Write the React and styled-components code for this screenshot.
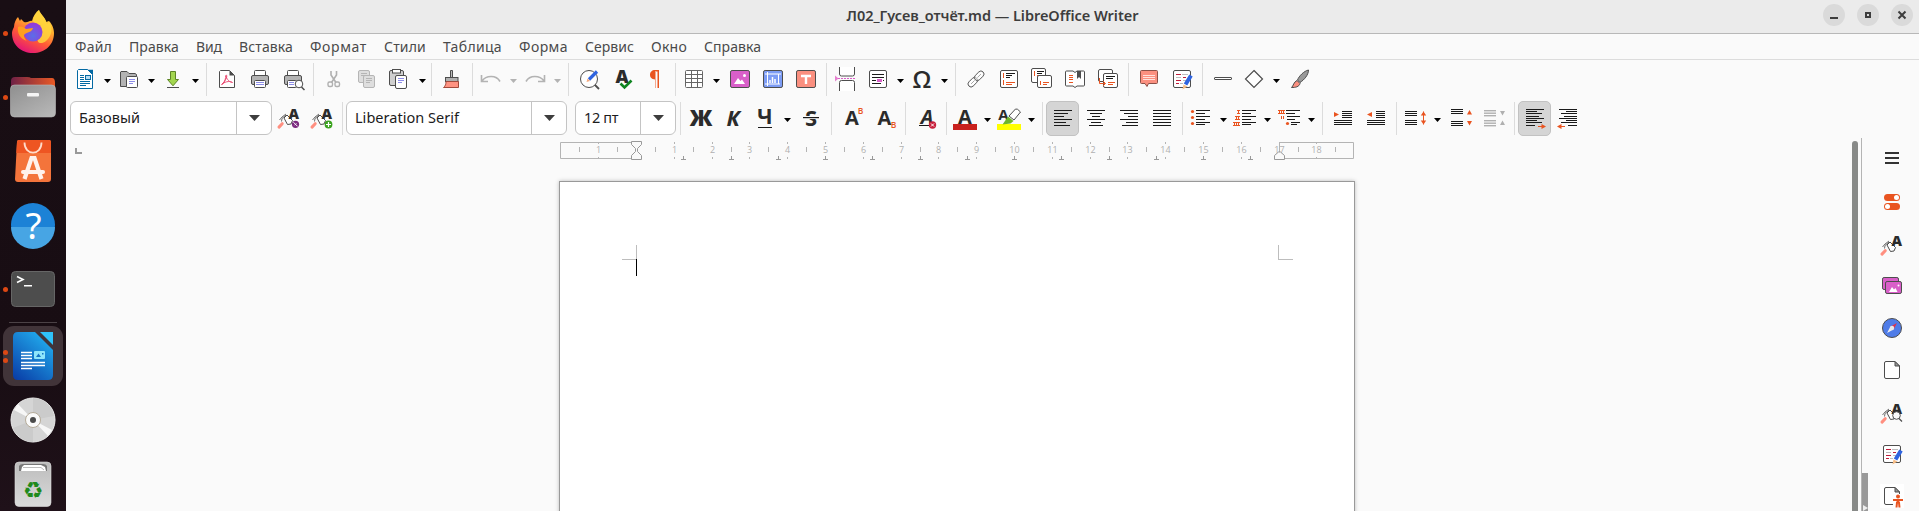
import React, { useLayoutEffect, useRef, useState } from 'react';
import styled, { createGlobalStyle, css } from 'styled-components';

const Global = createGlobalStyle`
  * { box-sizing: border-box; }
  html, body { margin: 0; padding: 0; overflow: hidden; }
  body { font-family: "Noto Sans", "Open Sans", sans-serif; background: #fafafa; }
  svg { display: block; overflow: visible; }
`;

const Desktop = styled.div`
  display: flex;
  width: 1919px;
  height: 511px;
  overflow: hidden;
`;

/* ---------- dock ---------- */
const Dock = styled.nav`
  flex: 0 0 66px;
  height: 511px;
  padding-top: 1px;
  background: linear-gradient(#190e14 0%, #180d13 70%, #1f1119 100%);
  overflow: hidden;
`;
const DockSlot = styled.div`
  position: relative;
  height: 64px;
  padding: 2px 3px;
`;
const DockTile = styled.div`
  width: 60px;
  height: 60px;
  border-radius: 11px;
  background: ${(p) => (p.$active ? '#413439' : 'transparent')};
`;
const DockDots = styled.div`
  position: absolute;
  left: 3px;
  top: 0;
  height: 64px;
  display: flex;
  flex-direction: column;
  justify-content: center;
  gap: 3px;
`;
const Dot = styled.i`
  width: 5px;
  height: 5px;
  border-radius: 50%;
  background: #dd4814;
`;
const DockRule = styled.div`
  height: 1px;
  margin: 1px 9px;
  background: #4b4246;
`;

/* ---------- window ---------- */
const Window = styled.main`
  flex: 1;
  min-width: 0;
  height: 511px;
  display: flex;
  flex-direction: column;
  background: #fafafa;
`;
const TitleBar = styled.header`
  position: relative;
  flex: 0 0 34px;
  display: flex;
  justify-content: center;
  background: #ebebeb;
  border-bottom: 1px solid #b8b8b8;
  color: #3d3d3d;
  font-size: 14.5px;
  font-weight: 600;
  line-height: 30px;
`;
const WindowButtons = styled.div`
  position: absolute;
  right: 6px;
  top: 4px;
  display: flex;
  gap: 12px;
`;
const WindowButton = styled.div`
  width: 22px;
  height: 22px;
  border-radius: 50%;
  background: #dadada;
`;
const MenuBar = styled.nav`
  flex: 0 0 26px;
  display: flex;
  gap: 17px;
  padding-left: 9px;
  border-bottom: 1px solid #dcdcdc;
  color: #4a4a4a;
  font-size: 14px;
  line-height: 25px;
`;
const Toolbar = styled.div`
  flex: 0 0 ${(p) => p.$height}px;
  display: flex;
  align-items: flex-start;
  padding: ${(p) => p.$top}px 0 0 ${(p) => p.$left}px;
`;
const ToolButton = styled.div`
  flex: none;
  width: 33px;
  height: 35px;
  padding: ${(p) => (p.$active ? '4px 3px' : '5px 4px')};
  margin-left: ${(p) => p.$pre || 0}px;
  ${(p) =>
    p.$active &&
    css`
      background: #d5d5d5;
      border: 1px solid #c2c2c2;
      border-radius: 5px;
    `}
`;
const Caret = styled.div`
  flex: none;
  width: 11px;
  height: 35px;
  padding: 17px 0 0 2px;
`;
const Divider = styled.div`
  flex: none;
  width: 1px;
  height: 33px;
  margin: 1px ${(p) => p.$r}px 0 ${(p) => p.$l}px;
  background: #dcdcdc;
`;
const Combo = styled.div`
  flex: none;
  display: flex;
  width: ${(p) => p.$width}px;
  height: 34px;
  margin-right: ${(p) => p.$after}px;
  border: 1px solid #c4c4c4;
  border-radius: 6px;
  background: #fff;
  color: #1c1c1c;
  font-size: 14.5px;
  line-height: 31px;
`;
const ComboText = styled.div`
  flex: 1;
  padding-left: 8px;
`;
const ComboArrow = styled.div`
  width: 35px;
  border-left: 1px solid #c4c4c4;
  padding: 13px 0 0 12px;
`;

const Work = styled.div`
  flex: 1;
  display: flex;
  min-height: 0;
`;
const DocumentArea = styled.section`
  flex: 0 0 1786px;
  display: flex;
  flex-direction: column;
  align-items: flex-start;
`;
const RulerRow = styled.div`
  flex: 0 0 44px;
  display: flex;
`;
const TabCorner = styled.div`
  width: 7px;
  height: 6px;
  margin: 11px 0 0 9px;
  border-left: 2px solid #999;
  border-bottom: 2px solid #999;
`;
const RulerBox = styled.div`
  margin: 0 0 0 475px;
`;
const Page = styled.article`
  flex: 0 0 360px;
  width: 796px;
  margin-left: 493px;
  padding: 63px 61px 0 62px;
  display: flex;
  align-items: flex-start;
  background: #fff;
  border: 1px solid #999;
  box-shadow: 0 0 4px rgba(0, 0, 0, 0.25);
`;
const MarginCorner = styled.div`
  width: 15px;
  height: 15px;
  margin-left: ${(p) => (p.$side === 'left' ? 'auto' : '0')};
  border-${(p) => p.$side}: 1px solid #bdbdbd;
  border-bottom: 1px solid #bdbdbd;
`;
const TextCursor = styled.div`
  width: 1px;
  height: 17px;
  margin: 14px 0 0 -1px;
  background: #000;
`;
const ScrollBar = styled.div`
  flex: 0 0 6px;
  margin-top: 4px;
  border-radius: 3px 3px 0 0;
  background: #888a88;
`;
const SideBar = styled.aside`
  flex: 1;
  display: flex;
  margin: 1px 0 0 3px;
  border-left: 1px solid #b4b4b4;
`;
const SideHandle = styled.div`
  align-self: flex-end;
  width: 6px;
  height: 38px;
  padding-top: 32px;
  background: #999;
`;
const SideTabs = styled.div`
  display: flex;
  flex-direction: column;
  gap: 18px;
  padding: 8px 0 0 12px;
`;
const SideTab = styled.div`
  flex: none;
  height: 24px;
  margin-bottom: ${(p) => (p.$first ? 2 : 0)}px;
  background: ${(p) => (p.$light ? '#fff' : 'none')};
`;
const FitBox = styled.span`
  display: inline-block;
  flex: none;
  white-space: nowrap;
`;

/* Tracks a label so that it fills the given width. */
function Fit({ width, children }) {
  const ref = useRef(null);
  const [spacing, setSpacing] = useState(0);
  useLayoutEffect(() => {
    const range = document.createRange();
    range.selectNodeContents(ref.current);
    const natural = range.getBoundingClientRect().width;
    setSpacing((width - natural) / children.length);
  }, [width, children]);
  return (
    <FitBox ref={ref} style={{ width, letterSpacing: spacing }}>
      {children}
    </FitBox>
  );
}

/* ---------- icon pieces ---------- */
const D = '#4d4d4d';
const O = '#e95420';
const K = '#1a1a1a';

const Lines = ({ rows, c = K, w = 1 }) =>
  rows.map(([y, a, b], i) => <rect key={i} x={a} y={y} width={b - a} height={w} fill={c} />);

const Sheet = ({ x, y, w, h, r = 1.5 }) => (
  <rect x={x + 0.5} y={y + 0.5} width={w - 1} height={h - 1} rx={r} fill="#fff" stroke={D} />
);
const Letter = ({ children, x = 12, y = 19, size = 20, fill = '#2b2b2b', weight = 700, italic }) => (
  <text
    x={x}
    y={y}
    fontSize={size}
    fontWeight={weight}
    fontStyle={italic ? 'italic' : 'normal'}
    fontFamily="Open Sans, Noto Sans, sans-serif"
    textAnchor="middle"
    fill={fill}
  >
    {children}
  </text>
);
const Brush = () => (
  <g transform="translate(0 1.5)">
    <path d="M2 19.6 5.2 16.2" stroke="#ff8f80" strokeWidth="3" strokeLinecap="round" />
    <path d="M2.500 12.500 5 9.500 9 6.500M4.500 14 5 11 9 7.500" fill="none" stroke={D} strokeWidth=".8" />
    <path d="M7 10.500 10 7.500 15.500 13 14 16.500 10.500 17Z" fill="#fff" stroke={D} strokeLinejoin="round" />
  </g>
);
const StyleBrush = () => (
  <g>
    <Brush />
    <Letter x={16.8} y={13.3} size={14.5} weight={800}>A</Letter>
  </g>
);
const Picture = ({ x = 0, y = 0, w = 20, h = 18, fill = '#d95fc9' }) => (
  <rect x={x + 0.5} y={y + 0.5} width={w - 1} height={h - 1} rx="1.6" fill={fill} stroke={D} />
);

const glyphs = {
  newdoc: (
    <>
      <path d="M5.500 2.500H14.500L19.500 7.500V21.500H4.500V3.500Z" fill="#fff" stroke="#0369a3" strokeLinejoin="round" />
      <path d="M14 2 20 8V2.800H14Z" fill="#0369a3" />
      <Lines c="#0369a3" rows={[[8, 7, 11], [10, 7, 11], [12, 7, 11], [14, 7, 17], [16, 7, 17], [18, 7, 13]]} />
      <rect x="12.500" y="8.500" width="5" height="4" fill="#b8dcf2" stroke="#0369a3" />
    </>
  ),
  open: (
    <>
      <path d="M3.500 5V19.500H19.500V7.500L18 6.500H12L10 4.500H4Z" fill="#b3b3b3" stroke={D} strokeLinejoin="round" />
      <rect x="9.500" y="9.500" width="11" height="11" rx="1" fill="#fff" stroke={D} />
      <Lines c="#8d8de8" rows={[[12, 12, 18], [14, 12, 18], [16, 12, 16]]} />
    </>
  ),
  save: (
    <>
      <path d="M9.500 4.500H14.500V12.500H17.500L12 18.800 6.500 12.500H9.500Z" fill="#a3d64f" stroke="#5d8526" strokeLinejoin="round" />
      <rect x="6" y="20" width="12" height="1" fill={D} />
    </>
  ),
  pdf: (
    <>
      <path d="M5.500 3.500H14.500L19.500 8.500V20.500H4.500V4.500Z" fill="#fff" stroke={D} strokeLinejoin="round" />
      <path d="M14.500 3.500V8.500H19.500Z" fill={D} />
      <path d="M11 8C13 8 11 14 6.500 17.500 8 18.500 11 12 10.800 8.500 12 13 15 15.500 17.500 15.500 16 14 11 14 7 17" fill="none" stroke="#e8416a" strokeWidth=".9" />
    </>
  ),
  print: (
    <>
      <rect x="6.500" y="3.500" width="11" height="7" rx="1" fill="#fff" stroke={D} />
      <rect x="3.500" y="8.500" width="17" height="9" rx="1.500" fill="#b3b3b3" stroke={D} />
      <rect x="6.500" y="13.500" width="11" height="7" rx="1" fill="#fff" stroke={D} />
      <Lines c="#8d8de8" rows={[[15, 8, 16], [17, 8, 16]]} />
    </>
  ),
  preview: (
    <>
      <rect x="6.500" y="3.500" width="11" height="7" rx="1" fill="#fff" stroke={D} />
      <rect x="3.500" y="8.500" width="17" height="9" rx="1.500" fill="#b3b3b3" stroke={D} />
      <rect x="6.500" y="13.500" width="9" height="7" rx="1" fill="#fff" stroke={D} />
      <Lines c="#8d8de8" rows={[[15, 8, 13], [17, 8, 13]]} />
      <circle cx="18" cy="17" r="3.800" fill="#fff" stroke={D} />
      <path d="M20.500 20 23.500 23" stroke={D} strokeWidth="1.500" />
    </>
  ),
  cut: (
    <g fill="none" stroke="#b0b0b0" strokeWidth="1.600">
      <path d="M9 4V8L14 15.500M14.500 4V8L9.500 15.500" />
      <rect x="6" y="15" width="4.500" height="4.500" rx="1.500" strokeWidth="1.400" />
      <rect x="13" y="15" width="4.500" height="4.500" rx="1.500" strokeWidth="1.400" />
    </g>
  ),
  copy: (
    <>
      <rect x="3.500" y="3.500" width="11" height="12" rx="1.500" fill="#dedede" stroke="#b5b5b5" />
      <Lines c="#b5b5b5" rows={[[6, 6, 12], [8, 6, 12]]} />
      <rect x="8.500" y="8.500" width="11" height="12" rx="1.500" fill="#dedede" stroke="#b5b5b5" />
      <Lines c="#b5b5b5" rows={[[11, 11, 17], [13, 11, 17], [15, 11, 15]]} />
    </>
  ),
  paste: (
    <>
      <rect x="1.500" y="3.500" width="14" height="15" rx="1.500" fill="#cfcfcf" stroke={D} />
      <rect x="4.500" y="2.500" width="8" height="3.500" fill="#fff" stroke={D} />
      <rect x="7.500" y="8.500" width="11" height="13" rx="1.500" fill="#fff" stroke={D} />
      <Lines c="#8d8de8" rows={[[11, 10, 16], [13, 10, 16], [15, 10, 14]]} />
    </>
  ),
  clone: (
    <>
      <path d="M10.500 3.500H12.500V10.500H10.500Z" fill="#bbb" stroke={D} />
      <rect x="5.500" y="10.500" width="12.500" height="4" fill="#b0b0b0" stroke={D} />
      <path d="M6 14.500H18.500V20.500H3.500C5.500 19 6 17 6 14.500Z" fill="#ff9382" stroke="#a14a3c" />
    </>
  ),
  undo: <path d="M2.500 8V14.500H9M3 14C7 8.500 17 7.500 21 14.500" fill="none" stroke="#b3b3b3" strokeWidth="1.600" />,
  redo: <path d="M21.500 8V14.500H15M21 14C17 8.500 7 7.500 3 14.500" fill="none" stroke="#b3b3b3" strokeWidth="1.600" />,
  find: (
    <>
      <circle cx="11" cy="12" r="8.500" fill="#fff" stroke={D} />
      <path d="M17 18 21 22" stroke={D} strokeWidth="1.800" />
      <path d="M11 12.500 19 4.500" stroke="#2f64e0" strokeWidth="3.200" />
      <path d="M8.500 15 9.500 11.500 12 14Z" fill="#f5a87c" />
    </>
  ),
  spell: (
    <>
      <Letter x={11} y={16} size={18} weight={800}>A</Letter>
      <path d="M9.500 16.500 13.500 20.500 20.500 13.500" fill="none" stroke="#0e8420" strokeWidth="2.600" />
    </>
  ),
  pilcrow: (
    <>
      <path d="M11 3H15V21H13.500V4.500H12V21H11V12.500C8 12.500 6 10.500 6 7.800S8 3 11 3Z" fill={O} />
      <path d="M11.500 4V21" stroke="#f4a88e" strokeWidth="1" />
    </>
  ),
  table: (
    <>
      <rect x="3.500" y="3.500" width="17" height="17" rx="1" fill="#fff" stroke="#666" />
      <path d="M3 7.500H21M3 11.500H21M3 15.500H21M9.500 4V20M15.500 4V20" stroke="#666" />
    </>
  ),
  image: (
    <g transform="translate(2 3)">
      <Picture />
      <path d="M4 14 8 8 10.500 11 12 9.500 15 14Z" fill="#fff" />
      <circle cx="14.500" cy="5.500" r="1.500" fill="#fff" />
    </g>
  ),
  chart: (
    <g transform="translate(2 3)">
      <Picture fill="#7c9cf5" />
      <path d="M2 4H18M4.500 2V16M2 14H17M15.500 4V14" stroke="#fff" fill="none" />
      <path d="M7 10V13M9.500 7V13M12 9V13" stroke="#fff" strokeWidth="1.500" />
    </g>
  ),
  textbox: (
    <g transform="translate(2 3)">
      <Picture fill="#fb9080" />
      <path d="M5 6H15M10 6V14" stroke="#fff" strokeWidth="2.400" />
    </g>
  ),
  pagebreak: (
    <>
      <path d="M6.500 0V7Q6.500 9 8.500 9H19.500Q21.500 9 21.500 7V0" fill="#fff" stroke={D} />
      <path d="M6.500 24V15.500Q6.500 13.500 8.500 13.500H19.500Q21.500 13.500 21.500 15.500V24" fill="#fff" stroke={D} />
      <path d="M2 8.500V14.500L5.500 11.500Z" fill="#e680cf" />
      <path d="M5 11.500H22" stroke="#d95fc9" strokeDasharray="2 1" />
    </>
  ),
  field: (
    <>
      <Sheet x={3} y={3} w={18} h={18} />
      <Lines rows={[[7, 6, 18], [10, 6, 18], [13, 6, 10], [16, 6, 15]]} />
      <rect x="11" y="12" width="5" height="3" fill="#d95fc9" />
      <Lines rows={[[13, 17, 18]]} />
    </>
  ),
  omega: <Letter y={20.8} size={24} weight={600}>Ω</Letter>,
  link: (
    <g transform="rotate(-45 12 12)" fill="#fff" stroke={D} strokeWidth=".9">
      <rect x="2" y="9" width="11" height="6" rx="3" />
      <rect x="11" y="9" width="11" height="6" rx="3" fillOpacity=".5" />
      <path d="M5 12H10M14 12H19" stroke="#8a8a8a" strokeWidth=".7" />
    </g>
  ),
  footnote: (
    <>
      <Sheet x={3} y={3} w={18} h={18} />
      <Lines rows={[[6, 9, 18], [8, 9, 15], [10, 9, 13]]} />
      <path d="M6.500 6V11M6.500 13V18M9 15.500H18M9 17.500H15" stroke={O} />
    </>
  ),
  endnote: (
    <>
      <Sheet x={1} y={1} w={15} h={15} />
      <Lines rows={[[4, 7, 14], [6, 7, 12]]} />
      <path d="M4.500 4V9M7 8.500H10" stroke={O} />
      <Sheet x={7} y={8} w={15} h={13} />
      <path d="M10.500 14V18M13 15.500H19M13 17.500H17" stroke={O} />
    </>
  ),
  bookmark: (
    <>
      <path d="M3.500 4H10L12 5.500 14 4H20.500Q21.500 4 21.500 5V18Q21.500 19 20.500 19H14L12 20.500 10 19H3.500Q2.500 19 2.500 18V5Q2.500 4 3.500 4Z" fill="#fff" stroke={D} />
      <path d="M6 8.500H10M6 10.500H10M6 12.500H10M6 15.500H10" stroke={O} />
      <path d="M14 4H18V12L16 10 14 12Z" fill={D} />
    </>
  ),
  crossref: (
    <>
      <Sheet x={2} y={2} w={15} h={13} />
      <Sheet x={7} y={6} w={15} h={15} />
      <Lines rows={[[9, 10, 19], [11, 10, 17]]} />
      <path d="M3.500 11V16.500H9M7 14 9.500 16.500 7 19M12 15.500H19M12 17.500H17" stroke={O} fill="none" />
    </>
  ),
  comment: (
    <>
      <path d="M4.500 3.500H19.500Q20.500 3.500 20.500 4.500V15.500Q20.500 16.500 19.500 16.500H11.500L10 19.500 8 16.500H4.500Q3.500 16.500 3.500 15.500V4.500Q3.500 3.500 4.500 3.500Z" fill="#fb9080" stroke="#8b5148" />
      <path d="M6 8.500H18M6 10.500H18M6 12.500H18" stroke="#ffe1dc" />
    </>
  ),
  track: (
    <>
      <Sheet x={3} y={3} w={18} h={18} />
      <path d="M6 7.500H11M13 10.500H16M6 13.500H11M6 16.500H9" stroke="#c01c3a" />
      <path d="M12 7.500H18M6 10.500H11M13 13.500H17M10 16.500H13" stroke="#bcbcbc" />
      <path d="M15.500 17.500 21 8.500" stroke="#2f64e0" strokeWidth="4" />
      <path d="M12.500 22.500 13.500 17.500 17.500 19.500Z" fill="#f7bd86" />
    </>
  ),
  line: <rect x="5.500" y="10.500" width="17" height="2" rx=".5" fill="#fff" stroke={D} />,
  shape: <path d="M12 3.500 20.500 12 12 20.500 3.500 12Z" fill="#fff" stroke={D} strokeWidth="1.200" />,
  brush: (
    <>
      <path d="M22.500 3C18 4 13 9 11.500 13L14 15.500C18 13 22.500 8 22.500 3Z" fill="#999" stroke={D} />
      <path d="M11 13.500 14 16.500C13 20 9.500 20.500 5.500 20.500 7.500 19 7.500 15 11 13.500Z" fill="#fb9080" stroke={D} />
    </>
  ),
  styleUpdate: (
    <>
      <StyleBrush />
      <circle cx="18.500" cy="18.300" r="3.600" fill="#7b2a7e" />
      <path d="M16.500 16.300 20.500 20.300" stroke="#fff" strokeWidth="1" />
      <path d="M17.500 19.300 19.500 17.300" stroke="#fff" strokeWidth=".8" />
    </>
  ),
  styleNew: (
    <>
      <StyleBrush />
      <circle cx="18.500" cy="18.500" r="3.900" fill="#3aa21e" />
      <path d="M16 18.500H21M18.500 16V21" stroke="#fff" strokeWidth="1.200" />
    </>
  ),
  bold: <Letter x={14} y={20} size={22} weight={800}>Ж</Letter>,
  italic: <Letter x={13} y={20} size={22} italic weight={700}>К</Letter>,
  underline: (
    <>
      <Letter x={12} y={18} size={21}>Ч</Letter>
      <rect x="5" y="21" width="14" height="1" fill={K} />
    </>
  ),
  strike: (
    <>
      <Letter x={14} y={20} size={22}>S</Letter>
      <rect x="6" y="10" width="16" height="3" fill="#fafafa" />
      <rect x="6" y="11" width="16" height="1.200" fill={K} />
    </>
  ),
  superscript: (
    <>
      <Letter x={10} y={19} size={20}>A</Letter>
      <Letter x={18.500} y={7.500} size={8.500} fill={O} weight={600}>B</Letter>
    </>
  ),
  subscript: (
    <>
      <Letter x={9.500} y={19} size={20}>A</Letter>
      <Letter x={18.500} y={21.800} size={8.500} fill={O} weight={600}>B</Letter>
    </>
  ),
  clear: (
    <>
      <Letter x={11} y={17.500} size={20} italic>A</Letter>
      <rect x="3" y="19" width="13" height="1" fill={K} />
      <circle cx="16.500" cy="19" r="3.700" fill="#c7203c" />
      <path d="M15 17.500 18 20.500M18 17.500 15 20.500" stroke="#fff" strokeWidth="1" />
    </>
  ),
  fontcolor: (
    <>
      <Letter x={12} y={18} size={20}>A</Letter>
      <rect y="18" width="24" height="6" fill="#c9211e" />
    </>
  ),
  highlight: (
    <>
      <Letter x={6.500} y={14} size={15}>A</Letter>
      <rect y="18" width="24" height="6" fill="#ffff00" />
      <path d="M12 10 18.500 3Q20 2 23.500 6L17 14Z" fill="#fff" stroke={D} />
      <path d="M5.500 18.500 11 10.500 16.500 15 13.500 17.500Z" fill="#6fb52c" />
    </>
  ),
  left: <Lines rows={[[4, 4, 22], [7, 4, 18], [10, 4, 14], [13, 4, 22], [16, 4, 16], [19, 4, 20]]} />,
  center: <Lines rows={[[4, 4, 22], [7, 7, 19], [10, 9, 17], [13, 4, 22], [16, 8, 18], [19, 6, 20]]} />,
  right: <Lines rows={[[4, 4, 22], [7, 8, 22], [10, 12, 22], [13, 4, 22], [16, 10, 22], [19, 6, 22]]} />,
  justify: <Lines rows={[[4, 4, 22], [7, 4, 22], [10, 4, 22], [13, 4, 22], [16, 4, 22], [19, 4, 22]]} />,
  bullets: (
    <>
      <Lines rows={[[4, 7, 21], [7, 7, 16], [10, 7, 21], [13, 7, 16], [16, 7, 21], [18, 7, 16]]} />
      <g fill={O}>
        <circle cx="3.500" cy="5.500" r="1.600" />
        <circle cx="3.500" cy="11.500" r="1.600" />
        <circle cx="3.500" cy="17.500" r="1.600" />
      </g>
    </>
  ),
  numbering: (
    <>
      <Lines rows={[[4, 9, 23], [7, 9, 18], [10, 9, 23], [13, 9, 18], [16, 9, 23], [18, 9, 18]]} />
      <path d="M4 4.500H7M4 7.500H7M5.500 4V8M2 10.500H7M2 13.500H7M3.500 10V14M5.500 10V14M0 16.500H7M0 19.500H7M1.500 16V20M3.500 16V20M5.500 16V20" stroke={O} />
    </>
  ),
  outline: (
    <>
      <Lines rows={[[4, 9, 23], [7, 9, 18], [10, 10, 23], [13, 10, 18], [16, 14, 23], [18, 14, 20]]} />
      <path d="M1 4.500H8M1 7.500H8M2.500 4V8M4.500 4V8M6.500 4V8M4.500 10V13M6.500 10V13" stroke={O} />
      <circle cx="10.500" cy="17.500" r="1.600" fill={O} />
    </>
  ),
  indent: (
    <>
      <Lines rows={[[5, 11, 21], [7, 11, 21], [9, 11, 21], [11, 11, 21], [14, 3, 21], [16, 3, 21], [18, 3, 21]]} />
      <path d="M3 6V11L8 8.500Z" fill={O} />
    </>
  ),
  outdent: (
    <>
      <Lines rows={[[5, 12, 21], [7, 12, 21], [9, 12, 21], [11, 12, 21], [14, 3, 21], [16, 3, 21], [18, 3, 21]]} />
      <path d="M8 6V11L3 8.500Z" fill={O} />
    </>
  ),
  spacing: (
    <>
      <Lines rows={[[5, 2, 14], [7, 2, 14], [9, 2, 14], [14, 2, 14], [16, 2, 14], [18, 2, 14]]} />
      <path d="M20.500 5.500V18.500" stroke={O} />
      <path d="M17.800 9.500H23.200L20.500 5.500ZM17.800 14.500H23.200L20.500 18.500Z" fill={O} />
    </>
  ),
  paraInc: (
    <>
      <Lines rows={[[3, 2, 14], [5, 2, 14], [7, 2, 14], [15, 2, 14], [17, 2, 14], [19, 2, 14]]} />
      <path d="M18 8.500H23L20.500 4ZM18 15H23L20.500 19.500Z" fill={O} />
    </>
  ),
  paraDec: (
    <>
      <Lines c="#b0b0b0" w={1.400} rows={[[4, 2, 14], [6.500, 2, 14], [9, 2, 14], [14, 2, 14], [16.500, 2, 14], [19, 2, 14]]} />
      <path d="M18 5H23L20.500 9.500ZM18 19H23L20.500 14.500Z" fill="#b0b0b0" />
    </>
  ),
  ltr: (
    <>
      <Lines rows={[[3, 4, 22], [5, 4, 15], [7, 4, 20], [10, 4, 17], [12, 4, 22], [14, 4, 15], [16, 4, 20], [19, 4, 13]]} />
      <path d="M16 20.500H20" stroke={O} />
      <path d="M19.500 18V23L24 20.500Z" fill={O} />
    </>
  ),
  rtl: (
    <>
      <Lines rows={[[3, 4, 22], [5, 11, 22], [7, 6, 22], [10, 9, 22], [12, 4, 22], [14, 11, 22], [16, 6, 22], [19, 13, 22]]} />
      <path d="M6 20.500H10" stroke={O} />
      <path d="M6.500 18V23L2 20.500Z" fill={O} />
    </>
  ),
  menu: (
    <>
      <rect x="5" y="6" width="14" height="2" fill="#333" />
      <rect x="5" y="11" width="14" height="2" fill="#333" />
      <rect x="5" y="16" width="14" height="2" fill="#333" />
    </>
  ),
  toggles: (
    <>
      <rect x="4" y="4" width="16" height="7" rx="3.500" fill={O} />
      <circle cx="16.500" cy="7.500" r="2.500" fill="#fff" />
      <rect x="4" y="13" width="16" height="7" rx="3.500" fill={O} />
      <circle cx="7.500" cy="16.500" r="2.500" fill="#fff" />
    </>
  ),
  styles: (
    <g transform="translate(0 1)">
      <StyleBrush />
    </g>
  ),
  gallery: (
    <>
      <Picture x={2} y={3} w={17} h={13} />
      <Picture x={5} y={7} w={17} h={13} />
      <path d="M9 18 12 13 14 15.500 15.500 14 17.500 18Z" fill="#fff" />
      <circle cx="18.500" cy="11.500" r="1" fill="#fff" />
    </>
  ),
  navigator: (
    <>
      <circle cx="12" cy="12" r="9.500" fill="#4f7ce8" stroke={D} />
      <path d="M7 17 10.500 10.500 13.500 13.500Z" fill="#eee" />
      <path d="M17 7 10.500 10.500 13.500 13.500Z" fill="#e0304a" />
      <circle cx="12" cy="12" r="2.200" fill="#e8e8e8" />
    </>
  ),
  page: (
    <>
      <path d="M6 3.500H15L19.500 8V19Q19.500 20.500 18 20.500H6Q4.500 20.500 4.500 19V5Q4.500 3.500 6 3.500Z" fill="#fff" stroke={D} />
      <path d="M15 3.500V8H19.500Z" fill="#999" stroke={D} />
    </>
  ),
  inspector: (
    <g transform="translate(0 1)">
      <StyleBrush />
      <circle cx="16.500" cy="14.500" r="3.800" fill="#fafafa" stroke={D} />
      <path d="M19 17.500 22 20.500" stroke={D} strokeWidth="1.300" />
    </g>
  ),
  access: (
    <>
      <path d="M13 20.500H6Q4.500 20.500 4.500 19V5Q4.500 3.500 6 3.500H15L19.500 8V10" fill="none" stroke={D} />
      <path d="M15 3.500V8H19.500Z" fill="#999" stroke={D} />
      <circle cx="18" cy="12.500" r="2" fill={O} />
      <path d="M13 16H23M18 15V19M16.500 23.500 17 18.500H19L19.500 23.500" fill="none" stroke={O} strokeWidth="2" />
    </>
  ),
};

const Icon = ({ name }) => (
  <svg width="24" height="24" viewBox="0 0 24 24">
    {glyphs[name]}
  </svg>
);
const DropArrow = ({ disabled }) => (
  <Caret>
    <svg width="7" height="4" viewBox="0 0 7 4">
      <path d="M0 0H7L3.500 4Z" fill={disabled ? '#b3b3b3' : '#000'} />
    </svg>
  </Caret>
);

/* One toolbar entry: a divider, or a button with an optional drop-down arrow. */
const renderItem = (item, i) =>
  item.divider ? (
    <Divider key={i} $l={item.divider[0]} $r={item.divider[1]} />
  ) : (
    <React.Fragment key={i}>
      <ToolButton $pre={item.pre} $active={item.active}>
        <Icon name={item.icon} />
      </ToolButton>
      {item.drop && <DropArrow disabled={item.disabled} />}
    </React.Fragment>
  );

const b = (icon, extra) => ({ icon, ...extra });
const drop = { drop: true };
const div = (l, r) => ({ divider: [l, r] });

const standardItems = [
  b('newdoc', drop), b('open', drop), b('save', drop), div(5, 4),
  b('pdf'), b('print'), b('preview'), div(3, 4),
  b('cut'), b('copy'), b('paste', drop), div(3, 4),
  b('clone'), div(3, 2),
  b('undo', { drop: true, disabled: true }), b('redo', { drop: true, disabled: true }), div(5, 5),
  b('find'), b('spell'), b('pilcrow'), div(2, 2),
  b('table', drop), b('image', { pre: 2 }), b('chart'), b('textbox'), div(3, 2),
  b('pagebreak'), b('field', drop), b('omega', drop), div(5, 4),
  b('link'), b('footnote'), b('endnote'), b('bookmark'), b('crossref'), div(3, 4),
  b('comment'), b('track'), div(3, 2),
  b('line'), b('shape', drop), b('brush'),
];

const formatItems = [
  b('bold'), b('italic'), b('underline', drop), b('strike'), div(5, 6),
  b('superscript'), b('subscript'), div(1, 6),
  b('clear'), div(1, 2),
  b('fontcolor', drop), b('highlight', drop), div(5, 3),
  b('left', { active: true }), b('center'), b('right'), b('justify'), div(4, 2),
  b('bullets', drop), b('numbering', drop), b('outline', drop), div(5, 4),
  b('indent'), b('outdent'), div(3, 2),
  b('spacing', drop), b('paraInc', { pre: 2 }), b('paraDec'), div(3, 3),
  b('ltr', { active: true }), b('rtl'),
];

const menus = [
  ['Файл', 37], ['Правка', 50], ['Вид', 26], ['Вставка', 54], ['Формат', 57], ['Стили', 42],
  ['Таблица', 59], ['Форма', 49], ['Сервис', 49], ['Окно', 36], ['Справка', 57],
];

const ComboBox = ({ text, textWidth, width, after }) => (
  <Combo $width={width} $after={after}>
    <ComboText>
      <Fit width={textWidth}>{text}</Fit>
    </ComboText>
    <ComboArrow>
      <svg width="11" height="6" viewBox="0 0 11 6">
        <path d="M0 0H11L5.500 6Z" fill="#3d3d3d" />
      </svg>
    </ComboArrow>
  </Combo>
);

/* Horizontal ruler: centimetre ticks, half ticks, default tab stops and indent handles. */
const CM = 37.8;
const ZERO = 79.5;
function Ruler() {
  const snap = (v) => Math.floor(v) + 0.5;
  const whole = [-1, ...Array.from({ length: 18 }, (_, i) => i + 1)];
  const halves = Array.from({ length: 21 }, (_, i) => i - 1.5).filter((v) => v < 19);
  const tabs = Array.from({ length: 13 }, (_, i) => (i + 1) * 1.25);
  return (
    <svg width="810" height="26" viewBox="0 0 810 26" fill="none">
      <path d={`M${ZERO} 5.500H3.500V21.500H${ZERO}`} stroke="#b4b4b4" />
      <path d="M722.500 20V5.500H796.500V21.500H726" stroke="#b4b4b4" />
      {whole.map((n) => {
        const x = snap(ZERO + n * CM);
        return (
          <g key={n}>
            <path d={`M${x} 5V7M${x} 20V22`} stroke="#b4b4b4" />
            <text x={x} y="16" fontSize="9" fontFamily="Open Sans, Noto Sans, sans-serif" textAnchor="middle" fill="#b0b0b0">
              {Math.abs(n)}
            </text>
          </g>
        );
      })}
      {halves.map((n) => (
        <path key={n} d={`M${snap(ZERO + n * CM)} 10V15`} stroke="#b4b4b4" />
      ))}
      {tabs.map((n) => {
        const x = snap(ZERO + n * CM);
        return <path key={n} d={`M${x} 19V22M${x - 2.5} 22.500H${x + 2.5}`} stroke="#999" />;
      })}
      <path d="M74.500 4.500H84.500V7.500L80.500 11.500V14.500L84.500 18.500V22.500H74.500V18.500L78.500 14.500V11.500L74.500 7.500Z" fill="#fafafa" stroke="#999" />
      <path d="M717.500 22.500V18.500L721.500 15H723.500L727.500 18.500V22.500Z" fill="#fafafa" stroke="#999" />
    </svg>
  );
}

/* ---------- dock drawings, on a 60x60 tile ---------- */
const Firefox = () => (
  <svg width="60" height="60" viewBox="0 0 60 60">
    <defs>
      <linearGradient id="fox" x1=".8" y1="0" x2=".3" y2="1">
        <stop offset="0" stopColor="#ffe14a" />
        <stop offset=".35" stopColor="#ffb02e" />
        <stop offset=".65" stopColor="#ff5a36" />
        <stop offset="1" stopColor="#e3127a" />
      </linearGradient>
      <radialGradient id="globe" cx=".5" cy=".7" r=".7">
        <stop offset="0" stopColor="#5b6ee8" />
        <stop offset="1" stopColor="#9a35d8" />
      </radialGradient>
    </defs>
    <path d="M11 24C11 20 13 16 15 14L17 18 18 16 21 19C25 20 27 17 29 18C30 13 33 9 36 7C37 11 42 14 43 19L46 18C50 22 51 27 51 30C51 42 42 50 30 50S9 42 9 30C9 28 10 26 11 24Z" fill="url(#fox)" />
    <path d="M36 7C37 11 43 15 44 21L46 19C50 25 49 33 43 38C38 42 33 40 35 34L38 25C35 20 29 20 30 17C31 12 34 9 36 7Z" fill="#ffd63d" opacity=".85" />
    <circle cx="30" cy="29" r="9.500" fill="url(#globe)" />
    <path d="M15 24C18 23 21 24 23 26L30 25C29 29 25 29 22 31C20 32 21 35 24 38C17 36 14 30 15 24Z" fill="#ff9e1f" />
  </svg>
);
const Files = () => (
  <svg width="60" height="60" viewBox="0 0 60 60">
    <defs>
      <linearGradient id="fold">
        <stop offset="0" stopColor="#6f2146" />
        <stop offset="1" stopColor="#ea5a25" />
      </linearGradient>
      <linearGradient id="body" x2=".8" y2="1">
        <stop offset="0" stopColor="#8f8f8f" />
        <stop offset="1" stopColor="#b6b6b6" />
      </linearGradient>
    </defs>
    <path d="M8 14Q8 10 12 10H24Q27 10 28 11H49Q52 11 52 16V28H8Z" fill="url(#fold)" />
    <rect x="7.500" y="18" width="45" height="32" rx="4" fill="url(#body)" stroke="#bbb" strokeWidth=".6" />
    <rect x="24" y="26" width="12" height="3.500" rx="1" fill="#f5f5f5" />
  </svg>
);
const Store = () => (
  <svg width="60" height="60" viewBox="0 0 60 60">
    <path d="M14 9H46Q48 9 48 11L48 48Q48 51 45 51H15Q12 51 12 48L14 11Q14 9 16 9Z" fill="#f4743b" />
    <path d="M16 9H46Q48 9 48 11V22H13.300L14 11Q14 9 16 9Z" fill="#ee5522" />
    <path d="M21.500 11.500C21.500 25 38.500 25 38.500 11.500" fill="none" stroke="#ffdccb" strokeWidth="1.800" />
    <path d="M21.500 48 28.500 27H31.500L38.500 48" fill="none" stroke="#fff2ec" strokeWidth="4.200" />
    <path d="M20 41H40" stroke="#fff2ec" strokeWidth="4" strokeLinecap="round" />
  </svg>
);
const Help = () => (
  <svg width="60" height="60" viewBox="0 0 60 60">
    <circle cx="30" cy="30" r="22" fill="#1c82d6" />
    <path d="M8 32H52A22 22 0 0 1 8 32Z" fill="#47a5e4" />
    <text x="30.500" y="44" fontSize="37" fontFamily="Noto Sans, sans-serif" textAnchor="middle" fill="#fff">?</text>
  </svg>
);
const Terminal = () => (
  <svg width="60" height="60" viewBox="0 0 60 60">
    <rect x="8.500" y="12.500" width="43" height="35" rx="4" fill="#4d4d4d" stroke="#666" />
    <path d="M14 17.500 20 20.500 14 23.500" fill="none" stroke="#fff" strokeWidth="1.600" />
    <rect x="21" y="26" width="8" height="1.500" fill="#fff" />
  </svg>
);
const Writer = () => (
  <svg width="60" height="60" viewBox="0 0 60 60">
    <defs>
      <linearGradient id="wr" x1=".8" x2=".1" y2="1">
        <stop offset="0" stopColor="#22b0f0" />
        <stop offset="1" stopColor="#0a3fa8" />
      </linearGradient>
    </defs>
    <path d="M15 6H32L50 24V49Q50 54 45 54H15Q10 54 10 49V11Q10 6 15 6Z" fill="url(#wr)" />
    <path d="M37 6H50V19Z" fill="#2fc3fb" />
    <path d="M18 26.500H29M18 29.500H29M18 32.500H29M18 36.500H42M18 39.500H42M18 42.500H29" stroke="#fff" strokeWidth="1.300" />
    <rect x="31" y="25" width="11" height="8" rx="1" fill="#8fe6fb" />
    <path d="M33 31 35.500 27.500 38 31Z" fill="#1674c4" />
    <rect x="39" y="27" width="1.500" height="1.500" fill="#1674c4" />
  </svg>
);
const Disc = () => (
  <svg width="60" height="60" viewBox="0 0 60 60">
    <circle cx="30" cy="30" r="22" fill="#d5d5d5" stroke="#ececec" />
    <path d="M30 30 30 8A22 22 0 0 1 51 26Z" fill="#cbcbcb" />
    <path d="M30 30 30 52A22 22 0 0 1 10 38Z" fill="#cbcbcb" />
    <path d="M30 30 11 20 15 14ZM30 30 49 40 45 46Z" fill="#f7f7f7" />
    <circle cx="30" cy="30" r="7.500" fill="#fafafa" stroke="#b5ab99" />
    <circle cx="30" cy="30" r="3" fill="#4a4a4a" />
  </svg>
);
const Trash = () => (
  <svg width="60" height="60" viewBox="0 0 60 60">
    <defs>
      <linearGradient id="bin" y2="1" x2="0">
        <stop offset="0" stopColor="#bcbcbc" />
        <stop offset="1" stopColor="#dadada" />
      </linearGradient>
    </defs>
    <rect x="12" y="8" width="36" height="44.500" rx="4" fill="url(#bin)" stroke="#ddd" strokeWidth=".6" />
    <path d="M16 17V12Q17 10 20 10H40Q43 10 44 12V17Z" fill="#777" />
    <path d="M18 17 19 13 21 11H38L42 13 43 17Z" fill="#fff" />
    <path d="M20 13.500H38L41 16" fill="none" stroke="#aaa" strokeWidth=".8" />
    <text x="30" y="44" fontSize="23" fontFamily="DejaVu Sans, sans-serif" textAnchor="middle" fill="#1f8a1c">♻</text>
  </svg>
);

const DockItem = ({ dots = 0, active, children }) => (
  <DockSlot>
    <DockTile $active={active}>{children}</DockTile>
    <DockDots>
      {Array.from({ length: dots }, (_, i) => (
        <Dot key={i} />
      ))}
    </DockDots>
  </DockSlot>
);

const sideIcons = ['menu', 'toggles', 'styles', 'gallery', 'navigator', 'page', 'inspector', 'track', 'access'];

export default function App() {
  return (
    <Desktop>
      <Global />
      <Dock>
        <DockItem dots={1}><Firefox /></DockItem>
        <DockItem dots={1}><Files /></DockItem>
        <DockItem><Store /></DockItem>
        <DockItem><Help /></DockItem>
        <DockItem dots={1}><Terminal /></DockItem>
        <DockRule />
        <DockItem dots={2} active><Writer /></DockItem>
        <DockItem><Disc /></DockItem>
        <DockItem><Trash /></DockItem>
      </Dock>
      <Window>
        <TitleBar>
          <Fit width={292}>Л02_Гусев_отчёт.md — LibreOffice Writer</Fit>
          <WindowButtons>
            <WindowButton>
              <svg width="22" height="22"><rect x="7" y="13" width="8" height="2" fill="#3d3d3d" /></svg>
            </WindowButton>
            <WindowButton>
              <svg width="22" height="22"><rect x="9" y="9" width="4" height="4" fill="none" stroke="#3d3d3d" strokeWidth="2" /></svg>
            </WindowButton>
            <WindowButton>
              <svg width="22" height="22"><path d="M7.500 7.500 14.500 14.500M14.500 7.500 7.500 14.500" stroke="#3d3d3d" strokeWidth="2" /></svg>
            </WindowButton>
          </WindowButtons>
        </TitleBar>
        <MenuBar>
          {menus.map(([label, width]) => (
            <Fit key={label} width={width}>{label}</Fit>
          ))}
        </MenuBar>
        <Toolbar $height={38} $top={2} $left={3}>
          {standardItems.map(renderItem)}
        </Toolbar>
        <Toolbar $height={39} $top={3} $left={4}>
          <ComboBox text="Базовый" textWidth={61} width={202} after={1} />
          <ToolButton><Icon name="styleUpdate" /></ToolButton>
          <ToolButton><Icon name="styleNew" /></ToolButton>
          <Divider $l={3} $r={3} />
          <ComboBox text="Liberation Serif" textWidth={104} width={221} after={8} />
          <ComboBox text="12 пт" textWidth={34} width={101} after={0} />
          <Divider $l={4} $r={2} />
          {formatItems.map(renderItem)}
        </Toolbar>
        <Work>
          <DocumentArea>
            <RulerRow>
              <TabCorner />
              <RulerBox><Ruler /></RulerBox>
            </RulerRow>
            <Page>
              <MarginCorner $side="right" />
              <TextCursor />
              <MarginCorner $side="left" />
            </Page>
          </DocumentArea>
          <ScrollBar />
          <SideBar>
            <SideHandle>
              <svg width="6" height="6"><path d="M1 0 6 3 1 6Z" fill="#eee" /></svg>
            </SideHandle>
            <SideTabs>
              {sideIcons.map((name, i) => (
                <SideTab key={name} $first={i === 0} $light={name === 'access'}>
                  <Icon name={name} />
                </SideTab>
              ))}
            </SideTabs>
          </SideBar>
        </Work>
      </Window>
    </Desktop>
  );
}
